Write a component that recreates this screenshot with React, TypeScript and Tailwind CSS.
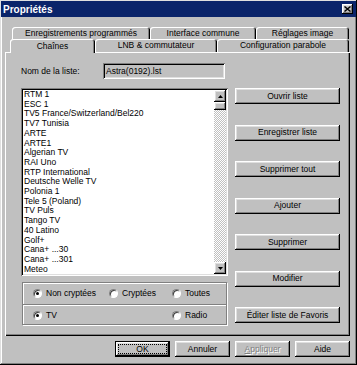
const raised =
  "bg-[#c0c0c0] shadow-[inset_-1px_-1px_0_#000,inset_1px_1px_0_#fff,inset_-2px_-2px_0_#808080,inset_2px_2px_0_#dfdfdf]";
const sunken =
  "shadow-[inset_1px_1px_0_#808080,inset_-1px_-1px_0_#fff,inset_2px_2px_0_#000,inset_-2px_-2px_0_#dfdfdf]";
const tab =
  "flex items-center justify-center rounded-t-[3px] shadow-[inset_1px_1px_0_#fff,inset_-1px_0_0_#000,inset_-2px_0_0_#808080]";

const channels = [
  "RTM 1",
  "ESC 1",
  "TV5 France/Switzerland/Bel220",
  "TV7 Tunisia",
  "ARTE",
  "ARTE1",
  "Algerian TV",
  "RAI Uno",
  "RTP International",
  "Deutsche Welle TV",
  "Polonia 1",
  "Tele 5 (Poland)",
  "TV Puls",
  "Tango TV",
  "40 Latino",
  "Golf+",
  "Cana+ ...30",
  "Cana+ ...301",
  "Meteo",
];

const sideButtons = [
  "Ouvrir liste",
  "Enregistrer liste",
  "Supprimer tout",
  "Ajouter",
  "Supprimer",
  "Modifier",
  "Éditer liste de Favoris",
];

function Radio({ on, label }: { on?: boolean; label: string }) {
  return (
    <div className="flex items-center gap-[4px]">
      <span className="w-[9px] h-[9px] shrink-0 rounded-full bg-white border border-t-[#808080] border-l-[#808080] border-b-white border-r-white shadow-[inset_1px_1px_0_#404040] flex items-center justify-center">
        {on && <span className="w-[3px] h-[3px] rounded-full bg-black" />}
      </span>
      <span>{label}</span>
    </div>
  );
}

function Arrow({ up }: { up?: boolean }) {
  return (
    <div className={`w-[12px] h-[12px] flex items-center justify-center ${raised}`}>
      <svg width="5" height="3" viewBox="0 0 5 3">
        <path d={up ? "M2.5 0L5 3H0z" : "M0 0h5L2.5 3z"} fill="#000" />
      </svg>
    </div>
  );
}

export default function App() {
  return (
    <div className="w-[357px] h-[365px] p-[1px] bg-[#c0c0c0] text-[8.5px] text-black font-['Liberation_Sans',Arial,sans-serif] shadow-[inset_-1px_-1px_0_#000,inset_1px_1px_0_#dfdfdf,inset_-2px_-2px_0_#808080,inset_2px_2px_0_#fff]">
      {/* Title bar */}
      <div className="h-[16px] bg-[#0a246a] flex items-center justify-between pl-[2px] pr-[3px]">
        <span className="text-white font-bold text-[10px]">Propriétés</span>
        <div className={`w-[11px] h-[10px] flex items-center justify-center ${raised}`}>
          <svg width="7" height="6" viewBox="0 0 7 6">
            <path d="M0.5 0.5L6.5 5.5M6.5 0.5L0.5 5.5" stroke="#000" strokeWidth="1.4" />
          </svg>
        </div>
      </div>

      {/* Tabs */}
      <div className="mt-[10px] flex h-[12px] ml-[11px]">
        <div className={`${tab} w-[138px]`}>Enregistrements programmés</div>
        <div className={`${tab} w-[106px]`}>Interface commune</div>
        <div className={`${tab} w-[93px]`}>Réglages image</div>
      </div>
      <div className="flex h-[13px] ml-[9px] items-start">
        <div className={`${tab} relative z-10 w-[85px] h-[14px] bg-[#c0c0c0]`}>Chaînes</div>
        <div className={`${tab} w-[122px] h-[13px]`}>LNB &amp; commutateur</div>
        <div className={`${tab} w-[132px] h-[13px]`}>Configuration parabole</div>
      </div>

      {/* Panel */}
      <div className="ml-[4px] w-[345px] h-[284px] flex shadow-[inset_1px_1px_0_#fff,inset_-1px_-1px_0_#000,inset_-2px_-2px_0_#808080]">
        <div className="pl-[16px] pt-[11px]">
          <div className="flex items-center h-[16px]">
            <span className="w-[82px]">Nom de la liste:</span>
            <div className={`w-[122px] h-[16px] pl-[3px] pt-[2px] ${sunken}`}>Astra(0192).lst</div>
          </div>

          <div className={`mt-[9px] w-[207px] h-[188px] bg-white flex p-[2px] ${sunken}`}>
            <div className="flex-1 pl-[1px] leading-[9.7px] overflow-hidden">
              {channels.map((c) => (
                <div key={c}>{c}</div>
              ))}
            </div>
            <div className="w-[12px] flex flex-col bg-[repeating-conic-gradient(#c0c0c0_0_25%,#fff_0_50%)] bg-[length:2px_2px]">
              <Arrow up />
              <div className={`w-[12px] h-[8px] ${raised}`} />
              <div className="flex-1" />
              <Arrow />
            </div>
          </div>

          <div className="mt-[6px] ml-[1px] w-[205px] h-[43px] border border-[#808080] shadow-[1px_1px_0_#fff,inset_1px_1px_0_#fff] flex flex-col">
            <div className="h-[21px] flex items-center pl-[10px]">
              <div className="w-[76px]">
                <Radio on label="Non cryptées" />
              </div>
              <div className="w-[63px]">
                <Radio label="Cryptées" />
              </div>
              <Radio label="Toutes" />
            </div>
            <div className="h-px bg-[#808080] border-b border-white box-content" />
            <div className="flex-1 flex items-center pl-[10px]">
              <div className="w-[139px]">
                <Radio on label="TV" />
              </div>
              <Radio label="Radio" />
            </div>
          </div>
        </div>

        <div className="ml-[7px] mt-[36px] w-[105px] h-[235px] flex flex-col justify-between">
          {sideButtons.map((b) => (
            <div key={b} className={`h-[16px] flex items-center justify-center ${raised}`}>
              {b}
            </div>
          ))}
        </div>
      </div>

      {/* Bottom buttons */}
      <div className="mt-[5px] flex justify-end gap-[5px] pr-[6px]">
        <div className={`w-[55px] h-[16px] border border-black p-[2px] ${raised}`}>
          <div className="h-full border border-dotted border-black flex items-center justify-center">OK</div>
        </div>
        <div className={`w-[55px] h-[16px] flex items-center justify-center ${raised}`}>Annuler</div>
        <div className={`w-[55px] h-[16px] flex items-center justify-center text-[#808080] [text-shadow:1px_1px_0_#fff] ${raised}`}>
          <span>
            <span className="underline">A</span>ppliquer
          </span>
        </div>
        <div className={`w-[55px] h-[16px] flex items-center justify-center ${raised}`}>Aide</div>
      </div>
    </div>
  );
}
